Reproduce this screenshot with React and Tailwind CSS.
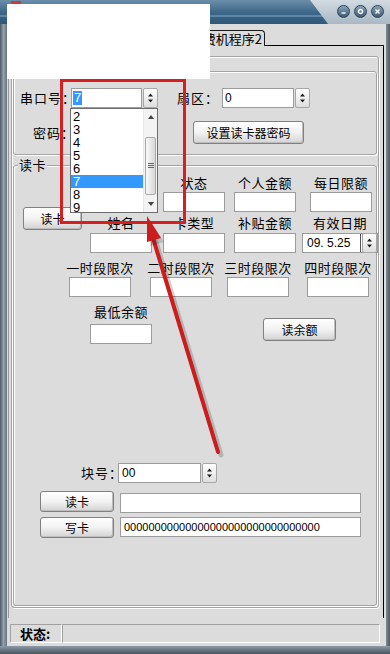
const etched =
  "rounded-[3px] border border-[#a3a3a3] shadow-[inset_1px_1px_0_#ffffff,1px_1px_0_#ffffff]";

function Spin({ className = "" }) {
  return (
    <div
      className={
        "flex h-[20px] w-[15px] shrink-0 items-center justify-center rounded-[2px] border border-[#a7a7a7] bg-gradient-to-b from-white to-[#dedede] " +
        className
      }
    >
      <svg width="5" height="10" viewBox="0 0 5 10">
        <path d="M2.5 0.5L5 3.5H0Z M0 6.5H5L2.5 9.5Z" fill="#1e1e1e" />
      </svg>
    </div>
  );
}

function Box({ className = "", children }) {
  return (
    <div className={"h-[20px] shrink-0 border border-[#9c9c9c] bg-white " + className}>
      {children}
    </div>
  );
}

function Btn({ className = "", children }) {
  return (
    <div
      className={
        "flex shrink-0 items-center justify-center rounded-[3px] border border-[#808080] bg-gradient-to-b from-white via-[#f2f2f2] to-[#d3d3d3] text-[12px] leading-none shadow-[inset_-1px_-1px_0_#bdbdbd] " +
        className
      }
    >
      {children}
    </div>
  );
}

function Field({ label, gap = "mt-[1px]", className = "" }) {
  return (
    <div className={"flex w-[62px] shrink-0 flex-col items-center " + className}>
      <span className="h-[17px] whitespace-nowrap leading-[17px] tracking-[0.5px]">{label}</span>
      <Box className={"w-full " + gap} />
    </div>
  );
}

function Circle({ children }) {
  return (
    <div className="flex h-[13px] w-[13px] items-center justify-center rounded-full border border-[#2d4458] bg-gradient-to-b from-[#8aa3b8] to-[#3f5b73] shadow-[0_0_0_1px_#b8c8d4]">
      <svg width="7" height="7" viewBox="0 0 7 7" fill="none" stroke="#fff" strokeWidth="1.4">
        {children}
      </svg>
    </div>
  );
}

export default function App() {
  const digits = "font-['Liberation_Sans',sans-serif]";
  return (
    <div className="relative h-[654px] w-[390px] overflow-hidden bg-[#5f6d79] font-['Noto_Sans_CJK_SC','Liberation_Sans',sans-serif] text-[13px] text-black">
      {/* title bar */}
      <div className="relative h-[24px] bg-gradient-to-b from-[#6b8fab] via-[#3e6889] to-[#2f5877]">
        <div className="absolute inset-x-0 top-[15px] h-[2px] bg-[#5d86a6]" />
        <div className="absolute right-0 top-0 h-[24px] w-[80px] bg-gradient-to-b from-[#d3dbe2] to-[#a9b8c4] [clip-path:polygon(0_0,100%_0,100%_100%,18px_100%)]" />
        <div className="absolute right-[6px] top-[5px] flex gap-[4px]">
          <Circle>
            <path d="M1.5 5H5.5" />
          </Circle>
          <Circle>
            <circle cx="3.5" cy="3.5" r="2" />
          </Circle>
          <Circle>
            <path d="M1.5 1.5L5.5 5.5M5.5 1.5L1.5 5.5" />
          </Circle>
        </div>
      </div>

      <div className="flex h-[622px]">
        <div className="w-[7px] bg-gradient-to-r from-[#4c5965] via-[#93a2ae] to-[#66747f]" />
        <div className="flex w-[379px] flex-col bg-[#dcdcdc]">
          {/* tab strip */}
          <div className="h-[21px] pt-[6px]">
            <div className="relative ml-[143px] h-[16px] w-[115px] rounded-tr-[4px] border border-b-0 border-[#1a1a1a] bg-[#dcdcdc] pr-[2px] text-right leading-[15px]">
              消费机程序2
            </div>
          </div>

          {/* tab panel */}
          <div className="ml-[1px] h-[573px] w-[376px] border border-b-0 border-black border-l-[#9a9a9a]">
            <div className={"ml-[2px] mt-[10px] h-[552px] w-[368px] " + etched}>
              {/* port settings */}
              <div className={"relative ml-[1px] mt-[14px] h-[84px] w-[364px] " + etched}>
                <div className="mt-[16px] flex h-[20px] items-center">
                  <span className="ml-[6px] w-[51px] shrink-0 whitespace-nowrap tracking-[1px]">串口号：</span>
                  <Box className="flex w-[71px] items-center pl-[1px]">
                    <span className={"bg-[#3399ff] px-[1px] text-[13px] leading-[14px] text-white " + digits}>7</span>
                  </Box>
                  <Spin className="ml-[1px]" />
                  <span className="ml-[19px] w-[45px] shrink-0 whitespace-nowrap tracking-[1px]">扇区：</span>
                  <Box className={"w-[72px] pl-[2px] text-[12px] leading-[18px] " + digits}>0</Box>
                  <Spin className="ml-[1px]" />
                </div>
                <div className="mt-[13px] flex h-[23px] items-center">
                  <span className="ml-[19px] w-[160px] shrink-0 whitespace-nowrap tracking-[1px]">密码：</span>
                  <Btn className="h-[23px] w-[111px]">设置读卡器密码</Btn>
                </div>
              </div>

              {/* read card */}
              <div className={"relative ml-[1px] mt-[10px] h-[441px] w-[364px] " + etched}>
                <span className="absolute left-[4px] top-[-9px] bg-[#dcdcdc] px-[1px] leading-[15px] tracking-[0.5px]">
                  读卡
                </span>
                <div className="flex">
                  <div className="w-[76px] shrink-0">
                    <Btn className="ml-[9px] mt-[41px] h-[23px] w-[59px]">读卡</Btn>
                  </div>
                  <div className="flex flex-col">
                    <div className="mt-[8px] flex">
                      <Field label="状态" className="ml-[73px]" />
                      <Field label="个人金额" className="ml-[9px]" />
                      <Field label="每日限额" className="ml-[14px]" />
                    </div>
                    <div className="mt-[2px] flex">
                      <Field label="姓名" gap="mt-[2px]" />
                      <Field label="卡类型" gap="mt-[2px]" className="ml-[11px]" />
                      <Field label="补贴金额" gap="mt-[2px]" className="ml-[9px]" />
                      <div className="ml-[6px] flex w-[76px] shrink-0 flex-col items-center">
                        <span className="h-[17px] whitespace-nowrap leading-[17px] tracking-[0.5px]">有效日期</span>
                        <Box className="mt-[2px] flex w-full items-center justify-between">
                          <span className={"pl-[4px] text-[12px] leading-[18px] " + digits}>09. 5.25</span>
                          <div className="flex h-full items-center border-l border-[#555]">
                            <Spin className="ml-[1px] h-[18px] w-[14px]" />
                          </div>
                        </Box>
                      </div>
                    </div>
                  </div>
                </div>

                <div className="mt-[6px] flex">
                  <Field label="一时段限次" className="ml-[55px]" />
                  <Field label="二时段限次" className="ml-[19px]" />
                  <Field label="三时段限次" className="ml-[15px]" />
                  <Field label="四时段限次" className="ml-[18px]" />
                </div>

                <div className="mt-[6px] flex items-start">
                  <Field label="最低余额" gap="mt-[4px]" className="ml-[76px]" />
                  <Btn className="ml-[111px] mt-[15px] h-[23px] w-[73px]">读余额</Btn>
                </div>

                <div className="mt-[119px] flex h-[20px] items-center">
                  <span className="ml-[67px] w-[37px] shrink-0 whitespace-nowrap tracking-[1px]">块号：</span>
                  <Box className={"w-[83px] pl-[3px] text-[12px] leading-[18px] " + digits}>00</Box>
                  <Spin className="ml-[1px]" />
                </div>
                <div className="mt-[8px] flex items-start">
                  <Btn className="ml-[26px] h-[21px] w-[74px]">读卡</Btn>
                  <Box className="ml-[6px] mt-[2px] w-[241px]" />
                </div>
                <div className="mt-[4px] flex items-start">
                  <Btn className="ml-[26px] h-[21px] w-[74px]">写卡</Btn>
                  <Box className={"ml-[6px] w-[241px] pl-[3px] text-[11px] leading-[18px] " + digits}>
                    00000000000000000000000000000000
                  </Box>
                </div>
              </div>
            </div>
          </div>

          {/* status bar */}
          <div className="ml-[3px] mt-[6px] flex h-[19px]">
            <div className="w-[52px] border border-[#a0a0a0] border-b-white border-r-white pl-[9px] font-bold leading-[17px]">
              状态:
            </div>
            <div className="w-[318px] border border-[#a0a0a0] border-b-white border-r-white" />
          </div>
        </div>
        <div className="w-[4px] bg-gradient-to-r from-[#7d8c98] to-[#4c5965]" />
      </div>
      <div className="h-[8px] bg-gradient-to-b from-[#8b9aa6] to-[#4a5660]" />

      {/* dropdown list */}
      <div className="absolute left-[70px] top-[108px] flex h-[105px] w-[88px] overflow-hidden border border-[#6e6e6e] bg-white">
        <div className={"w-[72px] shrink-0 pt-[1px] text-[13px] " + digits}>
          {["2", "3", "4", "5", "6", "7", "8", "9"].map((n) => (
            <div
              key={n}
              className={
                n === "7"
                  ? "h-[13px] bg-[#3399ff] pl-[2px] leading-[13px] text-white"
                  : "h-[13px] pl-[2px] leading-[13px]"
              }
            >
              {n}
            </div>
          ))}
        </div>
        <div className="flex w-[14px] flex-col border-l border-[#e6e6e6] bg-[#f3f3f3]">
          <div className="flex h-[16px] items-center justify-center">
            <svg width="6" height="4" viewBox="0 0 6 4">
              <path d="M3 0L6 4H0Z" fill="#444" />
            </svg>
          </div>
          <div className="mx-[1px] mt-[12px] flex h-[58px] items-center justify-center rounded-[2px] border border-[#a9a9a9] bg-gradient-to-r from-[#f8f8f8] to-[#d8d8d8]">
            <svg width="6" height="6" viewBox="0 0 6 6" stroke="#666" strokeWidth="1">
              <path d="M0 0.5H6M0 2.5H6M0 4.5H6" />
            </svg>
          </div>
          <div className="mt-auto flex h-[16px] items-center justify-center">
            <svg width="6" height="4" viewBox="0 0 6 4">
              <path d="M0 0H6L3 4Z" fill="#444" />
            </svg>
          </div>
        </div>
      </div>

      {/* annotation */}
      <div className="absolute left-[60px] top-[79px] h-[145px] w-[126px] border-[3px] border-[#d61f1f]" />
      <svg className="pointer-events-none absolute left-0 top-0" width="390" height="654">
        <line x1="156" y1="242" x2="221" y2="455" stroke="rgba(0,0,0,0.18)" strokeWidth="5" strokeLinecap="round" />
        <line x1="153" y1="238" x2="218" y2="452" stroke="#cc1d1d" strokeWidth="4" strokeLinecap="round" />
        <polygon points="150,220 164,242 150,246" fill="rgba(0,0,0,0.15)" />
        <polygon points="147,216 161,238 147,242" fill="#cc1d1d" />
      </svg>

      <div className="absolute left-[11px] top-[1px] h-[3px] w-[10px] bg-[#c43c3c]" />
      <div className="absolute left-[7px] top-[4px] h-[75px] w-[203px] bg-white" />
    </div>
  );
}
